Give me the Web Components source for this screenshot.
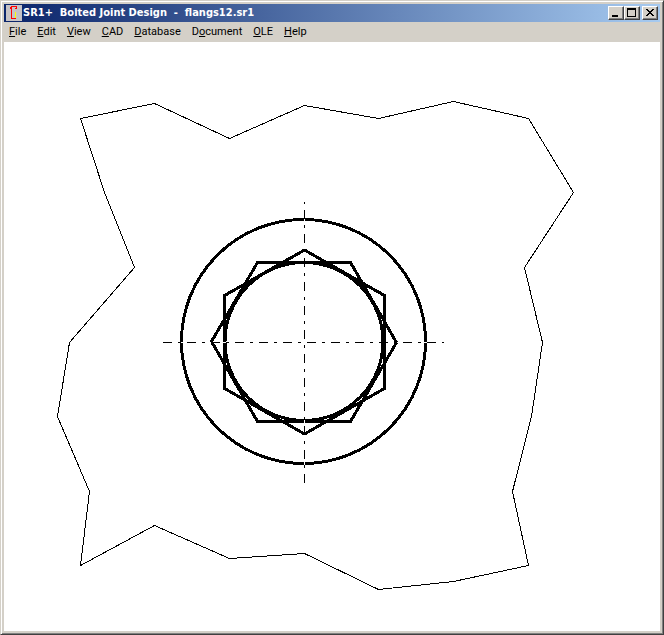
<!DOCTYPE html>
<html lang="en">
<head>
<meta charset="utf-8">
<title>SR1+ Bolted Joint Design - flangs12.sr1</title>
<style>
html, body { height: 100%; margin: 0; }
body { background: #d4d0c8; font: 11px/14px "DejaVu Sans Condensed", "DejaVu Sans", sans-serif; }
</style>
</head>
<body>
<app-window>
  <title-bar slot="title">SR1+&nbsp; Bolted Joint Design&nbsp; -&nbsp; flangs12.sr1</title-bar>
  <menu-bar slot="menu">
    <menu-item><u>F</u>ile</menu-item>
    <menu-item><u>E</u>dit</menu-item>
    <menu-item><u>V</u>iew</menu-item>
    <menu-item><u>C</u>AD</menu-item>
    <menu-item><u>D</u>atabase</menu-item>
    <menu-item>D<u>o</u>cument</menu-item>
    <menu-item><u>O</u>LE</menu-item>
    <menu-item><u>H</u>elp</menu-item>
  </menu-bar>
  <cad-view></cad-view>
</app-window>
<script>
function define(name, markup) {
  customElements.define(name, class extends HTMLElement {
    constructor() {
      super();
      this.attachShadow({ mode: "open" }).innerHTML = markup;
    }
  });
}

define("app-window", `
<style>
:host { display: flex; flex-direction: column; box-sizing: border-box; height: 100vh; padding: 2px; background: #d4d0c8;
  border: 1px solid; border-color: #d4d0c8 #404040 #404040 #d4d0c8; box-shadow: inset 1px 1px #fff, inset -1px -1px #808080; }
.body { display: flex; flex-direction: column; flex: 1; min-height: 0; padding: 1px; }
::slotted(cad-view) { flex: 1; min-height: 0; }
</style>
<div class="body"><slot name="title"></slot><slot name="menu"></slot><slot></slot></div>`);

define("title-bar", `
<style>
:host { display: flex; align-items: center; height: 18px; box-sizing: border-box; padding: 0 2px 0 2px;
  background: linear-gradient(90deg, #0a246a, #a6caf0); color: #fff; }
.icon { width: 16px; height: 16px; background: #c6c3c6; margin-right: 1px; flex: none; }
h1 { flex: 1; min-width: 0; margin: 0; font: bold 11px/16px "DejaVu Sans Condensed", "DejaVu Sans", sans-serif; white-space: nowrap; overflow: hidden; }
.close { margin-left: 2px; }
</style>
<svg class="icon" viewBox="0 0 16 16" shape-rendering="crispEdges" aria-hidden="true">
  <path d="M5 1h6v1h-6zM4 2h2v1h-2zM4 3h1v1h-1zM10 2h1v2h-1zM5 3h1v10h-1zM5 13h5v1h-5zM9 3h1v1h-1z" fill="#f00"/>
  <path d="M9 7h1v6h-1z" fill="#ff0"/>
</svg>
<h1><slot></slot></h1>
<caption-button label="Minimize"><svg width="12" height="10" shape-rendering="crispEdges"><path d="M2 7h6v2H2z"/></svg></caption-button>
<caption-button label="Maximize"><svg width="12" height="10" shape-rendering="crispEdges"><path fill-rule="evenodd" d="M1 0h9v9H1zM2 2v6h7V2z"/></svg></caption-button>
<caption-button class="close" label="Close"><svg width="12" height="10" shape-rendering="crispEdges"><path d="M2 1h2v1h1v1h2v-1h1v-1h2v1h-1v1h-1v1h-1v1h1v1h1v1h1v1h-2v-1h-1v-1h-2v1h-1v1h-2v-1h1v-1h1v-1h1v-1h-1v-1h-1v-1h-1z"/></svg></caption-button>`);

customElements.define("caption-button", class extends HTMLElement {
  constructor() {
    super();
    this.attachShadow({ mode: "open" }).innerHTML = `
<style>
:host { display: block; flex: none; }
button { display: block; box-sizing: border-box; width: 16px; height: 14px; padding: 1px; margin: 0; background: #d4d0c8;
  border: 1px solid; border-color: #fff #404040 #404040 #fff; box-shadow: inset -1px -1px #808080; color: #000; }
::slotted(svg) { display: block; }
</style>
<button type="button"><slot></slot></button>`;
    this.shadowRoot.querySelector("button").setAttribute("aria-label", this.getAttribute("label"));
  }
});

define("menu-bar", `
<style>:host { display: flex; height: 20px; box-sizing: border-box; align-items: center; background: #d4d0c8; }</style>
<slot></slot>`);

define("menu-item", `
<style>
:host { display: block; }
button { display: block; margin: 0; padding: 0 6px 0 5px; border: 0; background: none; color: #000;
  font: 11px/20px Roboto, "DejaVu Sans Condensed", sans-serif; white-space: nowrap; }
</style>
<button type="button"><slot></slot></button>`);

define("cad-view", `
<style>
:host { display: block; background: #fff; overflow: hidden; }
svg { display: block; width: 100%; height: 100%; }
</style>
<svg viewBox="4 42 656 589" preserveAspectRatio="xMinYMin meet" fill="none" stroke="#000" shape-rendering="crispEdges" role="img" aria-label="Top view of the bolt head">
  <path d="M80.500 118.500L154.500 103.500L229.500 138.500L304.500 105.500L378.500 118.500L453.500 101.500L528.500 118.500L573.500 192.500L524.500 267.500L542.500 342.500L531.500 416.500L512.500 491.500L528.500 565.500L453.500 581.500L378.500 589.500L304.500 553.500L229.500 558.500L154.500 525.500L80.500 565.500L89.500 491.500L57.500 416.500L69.500 342.500L134.500 267.500L104.500 192.500Z"/>
  <g stroke-width="3" stroke-linejoin="round">
    <circle cx="303.500" cy="341.500" r="122"/>
    <circle cx="304" cy="341.500" r="79"/>
    <path d="M257.500 262.500H350.500L396.500 342.500L350.500 421.500H257.500L211.500 341.500Z"/>
    <path d="M304.500 250L384.500 295.500V388.500L304.500 434L224.500 388.500V295.500Z"/>
  </g>
  <path stroke="#fff" d="M163 342.500H444M304.500 202V483"/>
  <path stroke-dasharray="9 6 3 6" d="M163 342.500H444M304.500 483V202"/>
</svg>`);
</script>
</body>
</html>
